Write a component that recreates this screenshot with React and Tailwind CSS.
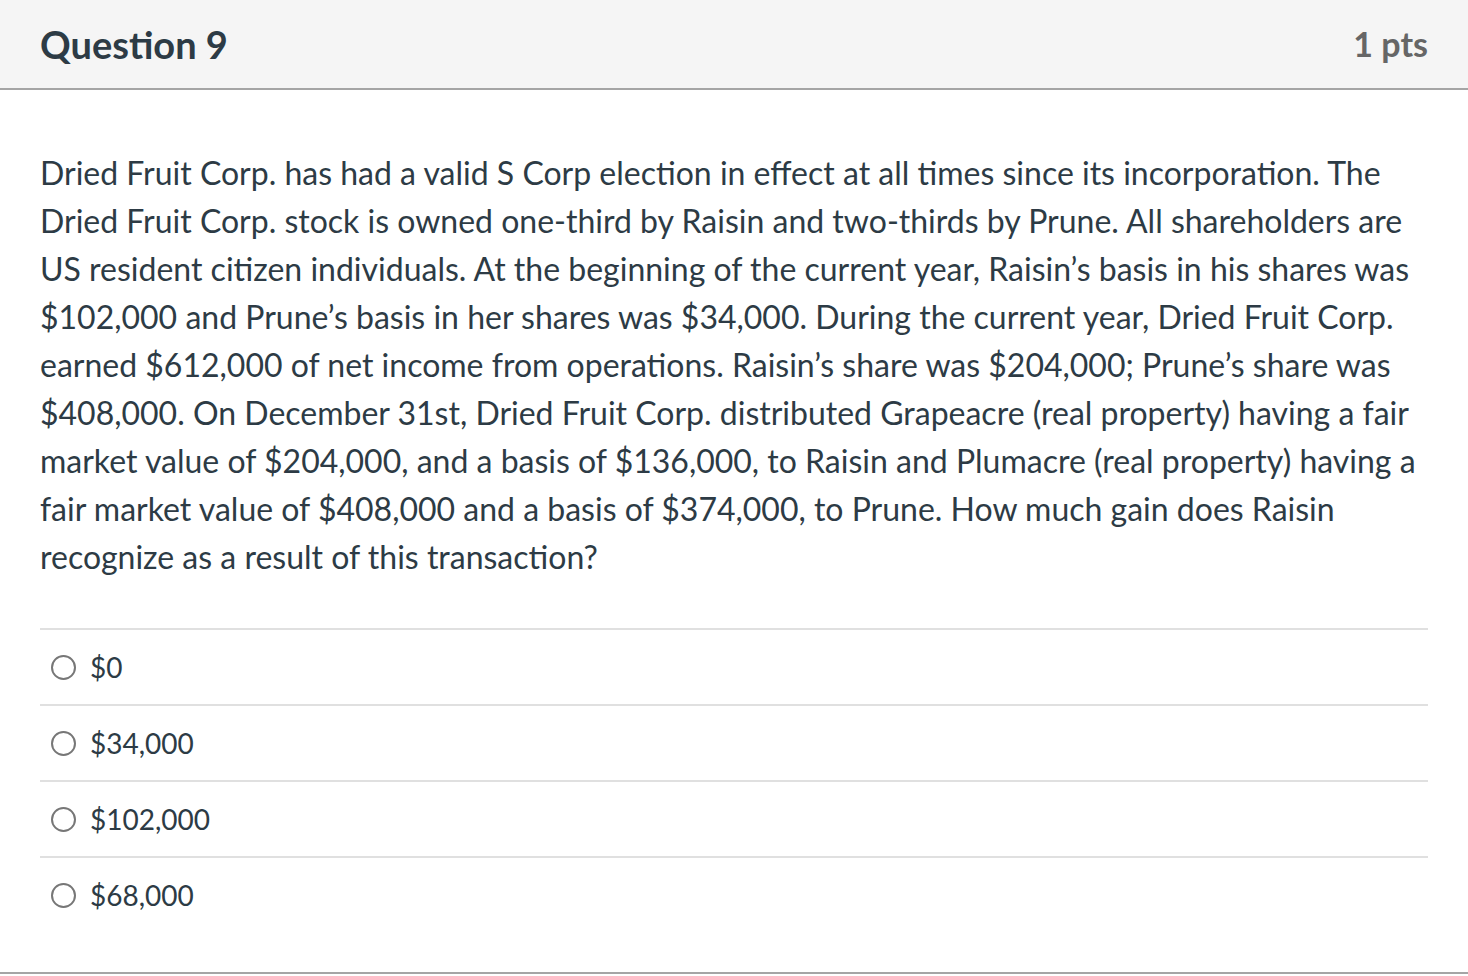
import React from "react";

const answers = ["$0", "$34,000", "$102,000", "$68,000"];

const lines = [
  "Dried Fruit Corp. has had a valid S Corp election in effect at all times since its incorporation. The",
  "Dried Fruit Corp. stock is owned one-third by Raisin and two-thirds by Prune. All shareholders are",
  "US resident citizen individuals. At the beginning of the current year, Raisin’s basis in his shares was",
  "$102,000 and Prune’s basis in her shares was $34,000. During the current year, Dried Fruit Corp.",
  "earned $612,000 of net income from operations. Raisin’s share was $204,000; Prune’s share was",
  "$408,000. On December 31st, Dried Fruit Corp. distributed Grapeacre (real property) having a fair",
  "market value of $204,000, and a basis of $136,000, to Raisin and Plumacre (real property) having a",
  "fair market value of $408,000 and a basis of $374,000, to Prune. How much gain does Raisin",
  "recognize as a result of this transaction?",
];

export default function App() {
  return (
    <div className="w-[1468px] h-[976px] bg-white font-['Lato','Open_Sans',sans-serif] text-[#2d3b45] overflow-hidden">
      <div className="h-[90px] bg-[#f5f5f5] border-b-2 border-[#a5a5a5] flex items-center justify-between px-10">
        <h2 className="text-[38px] font-bold text-[#2d3b45] leading-none">Question 9</h2>
        <span className="text-[34px] font-bold text-[#666666] leading-none">1 pts</span>
      </div>

      <div className="px-10 pt-[59px]">
        <p className="text-[32px] leading-[48px] whitespace-nowrap">
          {lines.map((l, i) => (
            <React.Fragment key={i}>
              {l}
              {i < lines.length - 1 ? <br /> : null}
            </React.Fragment>
          ))}
        </p>

        <div className="mt-[47px]">
          {answers.map((a) => (
            <label key={a} className="flex items-center h-[76px] border-t-2 border-[#e0e0e0] cursor-pointer">
              <span className="ml-[11px] w-[25px] h-[25px] rounded-full border-2 border-[#777777] bg-white shrink-0" />
              <span className="ml-[14px] text-[28px] leading-none">{a}</span>
            </label>
          ))}
        </div>
      </div>

      <div className="mt-[40px] border-b-2 border-[#a5a5a5]" />
    </div>
  );
}
